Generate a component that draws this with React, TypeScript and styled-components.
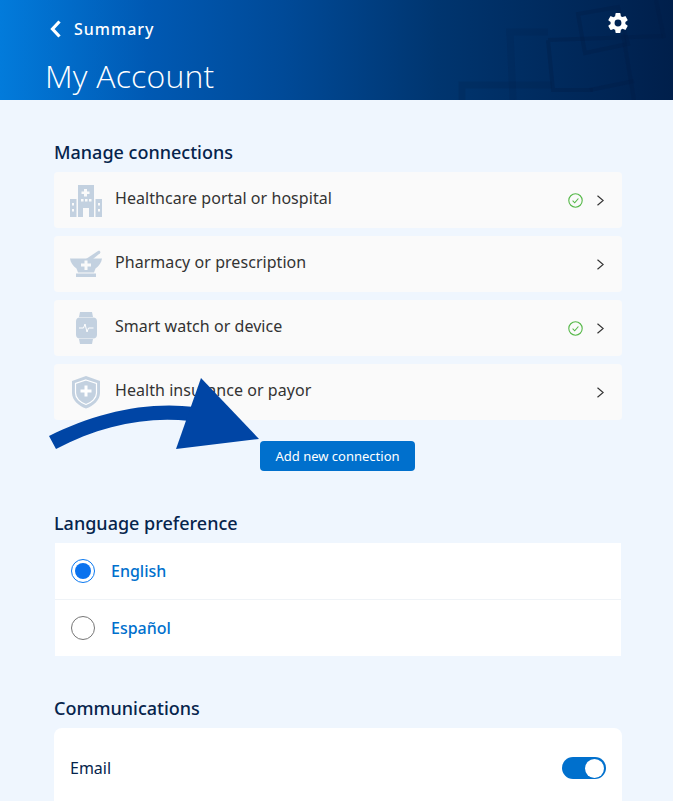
import React from "react";
import styled, { createGlobalStyle } from "styled-components";
import { IoSettingsSharp } from "react-icons/io5";

const Global = createGlobalStyle`
  html, body { margin: 0; padding: 0; background: #eff6fe; height: 801px; overflow: hidden; }
  * { box-sizing: border-box; }
  body { font-family: "Noto Sans", "Open Sans", sans-serif; }
`;

const Page = styled.div`
  position: relative;
  width: 673px;
  height: 801px;
  overflow: hidden;
  background: #eff6fe;
`;

const Header = styled.header`
  position: relative;
  height: 100px;
  overflow: hidden;
  padding: 17px 0 0 46px;
  color: #fff;
  background: linear-gradient(90deg, #027bdb 0%, #0059b3 22%, #004a98 42%, #00356f 65%, #001f4b 100%);
`;

const Pattern = styled.svg`
  position: absolute;
  right: 0;
  top: 0;
  width: 233px;
  height: 100px;
`;

const BackLink = styled.div`
  display: flex;
  align-items: center;
  gap: 13px;
  height: 24px;
  padding-left: 4px;
  font-size: 16px;
  font-weight: 500;
  letter-spacing: 1px;
`;

const Title = styled.h1`
  margin: 14px 0 0 -1px;
  font-family: "Open Sans", sans-serif;
  font-size: 32px;
  line-height: 42px;
  letter-spacing: 0.2px;
  font-weight: 300;
`;

const Gear = styled.div`
  position: absolute;
  left: 607px;
  top: 12px;
  width: 22px;
  height: 22px;
  font-size: 22px;
  line-height: 0;
`;

const Main = styled.main`
  padding: 40px 51px 0 54px;
`;

const Section = styled.section<{ $gap?: number }>`
  margin-bottom: ${(p) => p.$gap ?? 0}px;
`;

const Heading = styled.h2`
  margin: 0 0 8px;
  height: 24px;
  font-size: 18px;
  line-height: 24px;
  font-weight: 500;
  color: #06244c;
`;

const Rows = styled.div`
  display: flex;
  flex-direction: column;
  gap: 8px;
`;

const Row = styled.div`
  display: flex;
  align-items: center;
  height: 56px;
  padding: 0 18px 0 15px;
  background: #fafafa;
  border-radius: 4px;
`;

const RowIcon = styled.svg`
  width: 34px;
  height: 34px;
  flex: none;
  margin-right: 12px;
  margin-top: 2px;
`;

const RowLabel = styled.span`
  flex: 1;
  font-size: 16px;
  line-height: 22px;
  letter-spacing: 0.05px;
  color: #333;
  margin-top: -4px;
`;

const Check = styled.svg`
  width: 15px;
  height: 15px;
  margin-right: 14px;
`;

const Chevron = styled.svg`
  width: 7px;
  height: 11px;
`;

const ButtonRow = styled.div`
  display: flex;
  justify-content: center;
  margin-top: 21px;
  padding-right: 1px;
`;

const PrimaryButton = styled.button`
  width: 155px;
  height: 30px;
  padding: 0;
  border: 0;
  border-radius: 4px;
  background: #0070cd;
  color: #fff;
  font-family: inherit;
  font-size: 13px;
`;

const LanguageCard = styled.div`
  margin: 0 1px;
  background: #fff;
`;

const RoundCard = styled.div`
  background: #fff;
  border-radius: 8px 8px 0 0;
`;

const Option = styled.div<{ $last?: boolean }>`
  display: flex;
  align-items: center;
  gap: 16px;
  height: ${(p) => (p.$last ? 56 : 57)}px;
  padding-left: 16px;
  border-bottom: ${(p) => (p.$last ? "none" : "1px solid #eff3f7")};
`;

const Radio = styled.span<{ $on?: boolean }>`
  display: flex;
  align-items: center;
  justify-content: center;
  width: 24px;
  height: 24px;
  border-radius: 50%;
  border: 1px solid ${(p) => (p.$on ? "#0a78f0" : "#767676")};
  &::after {
    content: "";
    width: 16px;
    height: 16px;
    border-radius: 50%;
    background: ${(p) => (p.$on ? "#0a72ee" : "transparent")};
  }
`;

const OptionLabel = styled.span`
  font-size: 16px;
  font-weight: 500;
  color: #0070cd;
`;

const ToggleRow = styled.div`
  display: flex;
  align-items: center;
  justify-content: space-between;
  height: 80px;
  padding: 0 16px;
  color: #06244c;
  font-size: 16px;
`;

const Toggle = styled.span`
  display: flex;
  justify-content: flex-end;
  align-items: center;
  width: 44px;
  height: 22px;
  padding-right: 2px;
  border-radius: 11px;
  background: #0070cd;
  &::after {
    content: "";
    width: 19px;
    height: 19px;
    border-radius: 50%;
    background: #fff;
  }
`;

const Arrow = styled.svg`
  position: absolute;
  left: 40px;
  top: 370px;
  width: 240px;
  height: 100px;
`;

const ic = "#c3d1e0";

const Hospital = () => (
  <RowIcon viewBox="0 0 34 34">
    <path fill={ic} fillRule="evenodd" d="M9 1h16v32h-5v-9h-6v9H9zM15 5v2.500h-2.500v2.500H15v2.500h3V10h2.500V7.500H18V5zM12 15v2.500h2.500V15zM16 15v2.500h2.500V15zM20 15v2.500h2.500V15z" />
    <path fill={ic} fillRule="evenodd" d="M1 15h6.500v18H1zM3 19v2.500h2V19zM3 25v2.500h2V25zM26.500 15H33v18h-6.500zM29 19v2.500h2V19zM29 25v2.500h2V25z" />
  </RowIcon>
);

const Mortar = () => (
  <RowIcon viewBox="0 0 34 34">
    <path fill={ic} d="M17 11L29 3c1.500-1 3.200.8 2 2.200L24 11z" />
    <path fill={ic} fillRule="evenodd" d="M1 10.500h32c-.5 4-3 7.500-6.500 10L25 24.500H9l-1.500-4C4 18 1.500 14.500 1 10.500zM15.500 12.500v3H12v3h3.500v3.500h3v-3.500H22v-3h-3.500v-3z" />
    <path fill={ic} d="M7 25.500h20V29H7z" />
  </RowIcon>
);

const Watch = () => (
  <RowIcon viewBox="0 0 34 34">
    <path fill={ic} d="M11 0h12l1 5h-14zM10 27h14l-1 5h-12z" />
    <rect x="7" y="5.500" width="21" height="21" rx="4" fill={ic} />
    <path fill="none" stroke="#fff" strokeWidth="1" d="M10 16h4.500l1.500-4 2 8 1.500-4h5" />
  </RowIcon>
);

const Shield = () => (
  <RowIcon viewBox="0 0 34 34">
    <path fill={ic} d="M17 0l14 5v12c0 7-6.500 13-14 15.500C9.500 30 3 24 3 17V5z" />
    <path fill="none" stroke="#fff" strokeWidth="1.200" d="M17 4l10.500 3.500v9.500c0 5-4.500 9.500-10.500 11.500C11 26.500 6.500 22 6.500 17V7.500z" />
    <path fill="#fff" d="M15.500 9.500h3v4h4v3h-4v4h-3v-4h-4v-3h4z" />
  </RowIcon>
);

const Ok = () => (
  <Check viewBox="0 0 15 15">
    <circle cx="7.500" cy="7.500" r="6.700" fill="none" stroke="#55b848" strokeWidth="1.100" />
    <path d="M4.600 7.700l2.100 2.100 3.700-4.300" fill="none" stroke="#55b848" strokeWidth="1.100" />
  </Check>
);

const Next = () => (
  <Chevron viewBox="0 0 7 11">
    <path d="M.5 .7l5.700 4.800-5.700 4.800" fill="none" stroke="#333" strokeWidth="1.200" />
  </Chevron>
);

const items = [
  { icon: <Hospital />, label: "Healthcare portal or hospital", ok: true },
  { icon: <Mortar />, label: "Pharmacy or prescription", ok: false },
  { icon: <Watch />, label: "Smart watch or device", ok: true },
  { icon: <Shield />, label: "Health insurance or payor", ok: false },
];

export default function App() {
  return (
    <Page>
      <Global />
      <Header>
        <Pattern viewBox="0 0 233 100">
          <g fill="none" stroke="#001c45" strokeOpacity="0.32" strokeWidth="4">
            <path d="M138 14l40-7 10 37-43 9z" />
            <path d="M108 40l115-4M108 40l5 50h40" />
            <path d="M183 34l11 66" />
            <path d="M150 90l44-9" />
            <path d="M216 0l8 38" />
            <path d="M66 32h42M70 32l3 68" strokeOpacity="0.15" strokeWidth="7" />
            <path d="M22 100V85h90" strokeOpacity="0.2" strokeWidth="7" />
          </g>
        </Pattern>
        <BackLink>
          <svg width="11" height="18" viewBox="0 0 11 18">
            <path d="M9.500 1.500L2.500 9l7 7.500" fill="none" stroke="#fff" strokeWidth="3.200" />
          </svg>
          Summary
        </BackLink>
        <Title>My Account</Title>
        <Gear>
          <IoSettingsSharp />
        </Gear>
      </Header>
      <Main>
        <Section $gap={40}>
          <Heading>Manage connections</Heading>
          <Rows>
            {items.map((it) => (
              <Row key={it.label}>
                {it.icon}
                <RowLabel>{it.label}</RowLabel>
                {it.ok && <Ok />}
                <Next />
              </Row>
            ))}
          </Rows>
          <ButtonRow>
            <PrimaryButton>Add new connection</PrimaryButton>
          </ButtonRow>
        </Section>
        <Section $gap={40}>
          <Heading>Language preference</Heading>
          <LanguageCard>
            <Option>
              <Radio $on />
              <OptionLabel>English</OptionLabel>
            </Option>
            <Option $last>
              <Radio />
              <OptionLabel>Español</OptionLabel>
            </Option>
          </LanguageCard>
        </Section>
        <Section>
          <Heading>Communications</Heading>
          <RoundCard>
            <ToggleRow>
              Email
              <Toggle />
            </ToggleRow>
          </RoundCard>
        </Section>
      </Main>
      <Arrow viewBox="0 0 240 100">
        <path fill="#0045a5" d="M9 66C55 43 105 31 155 37L150 51C105 46 60 56 16 79z" />
        <path fill="#0045a5" d="M161 8L219 69 136 79z" />
      </Arrow>
    </Page>
  );
}
